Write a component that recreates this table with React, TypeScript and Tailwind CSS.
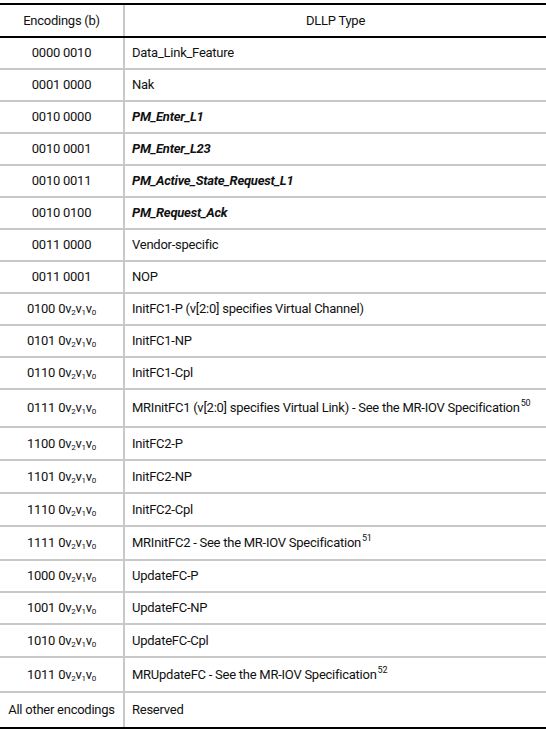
import type { ReactNode } from "react";

type Row = {
  enc: ReactNode;
  type: ReactNode;
  h: string;
};

function V({ prefix }: { prefix: string }) {
  return (
    <>
      {prefix} 0v<sub className="text-[8px]">2</sub>v<sub className="text-[8px]">1</sub>v
      <sub className="text-[8px]">0</sub>
    </>
  );
}

function Sup({ n }: { n: string }) {
  return <sup className="top-[-6px] ml-[1px] text-[9px]">{n}</sup>;
}

const em = (s: string) => <span className="font-bold italic">{s}</span>;

const rows: Row[] = [
  { enc: "0000 0010", type: "Data_Link_Feature", h: "h-[32px]" },
  { enc: "0001 0000", type: "Nak", h: "h-[32px]" },
  { enc: "0010 0000", type: em("PM_Enter_L1"), h: "h-[32px]" },
  { enc: "0010 0001", type: em("PM_Enter_L23"), h: "h-[32px]" },
  { enc: "0010 0011", type: em("PM_Active_State_Request_L1"), h: "h-[32px]" },
  { enc: "0010 0100", type: em("PM_Request_Ack"), h: "h-[32px]" },
  { enc: "0011 0000", type: "Vendor-specific", h: "h-[32px]" },
  { enc: "0011 0001", type: "NOP", h: "h-[32px]" },
  { enc: <V prefix="0100" />, type: "InitFC1-P (v[2:0] specifies Virtual Channel)", h: "h-[32px]" },
  { enc: <V prefix="0101" />, type: "InitFC1-NP", h: "h-[32px]" },
  { enc: <V prefix="0110" />, type: "InitFC1-Cpl", h: "h-[32px]" },
  {
    enc: <V prefix="0111" />,
    type: (
      <>
        MRInitFC1 (v[2:0] specifies Virtual Link) - See the MR-IOV Specification
        <Sup n="50" />
      </>
    ),
    h: "h-[38px]",
  },
  { enc: <V prefix="1100" />, type: "InitFC2-P", h: "h-[33px]" },
  { enc: <V prefix="1101" />, type: "InitFC2-NP", h: "h-[33px]" },
  { enc: <V prefix="1110" />, type: "InitFC2-Cpl", h: "h-[33px]" },
  {
    enc: <V prefix="1111" />,
    type: (
      <>
        MRInitFC2 - See the MR-IOV Specification
        <Sup n="51" />
      </>
    ),
    h: "h-[34px]",
  },
  { enc: <V prefix="1000" />, type: "UpdateFC-P", h: "h-[32px]" },
  { enc: <V prefix="1001" />, type: "UpdateFC-NP", h: "h-[32px]" },
  { enc: <V prefix="1010" />, type: "UpdateFC-Cpl", h: "h-[33px]" },
  {
    enc: <V prefix="1011" />,
    type: (
      <>
        MRUpdateFC - See the MR-IOV Specification
        <Sup n="52" />
      </>
    ),
    h: "h-[35px]",
  },
  { enc: "All other encodings", type: "Reserved", h: "h-[34px]" },
];

export default function App() {
  return (
    <div className="h-[730px] w-[546px] overflow-hidden bg-white pt-[3px] font-['Roboto',sans-serif] text-[13px] tracking-[-0.25px] text-[#111]">
      <div className="border-y-2 border-black">
        <div className="grid h-[33px] grid-cols-[125px_1fr] border-b-2 border-black">
          <div className="flex items-center justify-center border-r-2 border-[#c8c8c8]">Encodings (b)</div>
          <div className="flex items-center justify-center">DLLP Type</div>
        </div>
        {rows.map((r, i) => (
          <div
            key={i}
            className={`grid grid-cols-[125px_1fr] ${r.h} ${i < rows.length - 1 ? "border-b-2 border-[#c8c8c8]" : ""}`}
          >
            <div className="flex items-center justify-center whitespace-nowrap border-r-2 border-[#c8c8c8]">
              <span>{r.enc}</span>
            </div>
            <div className="flex items-center whitespace-nowrap pl-[7px]">
              <span>{r.type}</span>
            </div>
          </div>
        ))}
      </div>
    </div>
  );
}
